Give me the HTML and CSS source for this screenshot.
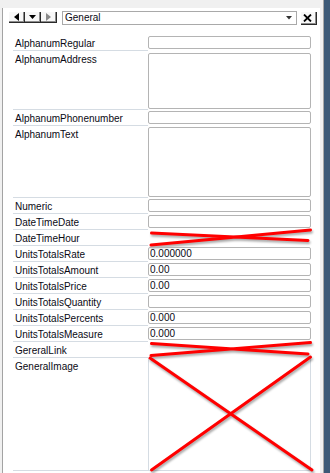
FILE: index.html
```html
<!DOCTYPE html>
<html>
<head>
<meta charset="utf-8">
<link rel="stylesheet" href="styles.css">
</head>
<body>
<div class="window">
  <div class="panel">
    <div class="toolbar">
      <div class="nav">
        <div class="nb"><svg width="5" height="8" viewBox="0 0 5 8"><polygon points="5,0 5,8 0,4" fill="#000"/></svg></div>
        <div class="nb"><svg width="7" height="4" viewBox="0 0 7 4"><polygon points="0,0 7,0 3.5,4" fill="#000"/></svg></div>
        <div class="nb"><svg width="5" height="8" viewBox="0 0 5 8"><polygon points="0,0 0,8 5,4" fill="#8a8a8a"/></svg></div>
      </div>
      <div class="combo">
        <span class="combo-text">General</span>
        <svg class="caret" width="6" height="4" viewBox="0 0 6 4"><polygon points="0,0 6,0 3,3.5" fill="#333"/></svg>
      </div>
      <div class="close"><svg width="9" height="8" viewBox="0 0 9 8"><path d="M1 0.5 L8 7.5 M8 0.5 L1 7.5" stroke="#000" stroke-width="1.8"/></svg></div>
    </div>

    <div class="grid">
      <div class="row"><div class="lbl">AlphanumRegular</div><div class="val"><div class="box"></div></div></div>
      <div class="row row-addr"><div class="lbl">AlphanumAddress</div><div class="val"><div class="box box-addr"></div></div></div>
      <div class="row"><div class="lbl">AlphanumPhonenumber</div><div class="val"><div class="box"></div></div></div>
      <div class="row row-text"><div class="lbl">AlphanumText</div><div class="val"><div class="box box-text"></div></div></div>
      <div class="row"><div class="lbl">Numeric</div><div class="val"><div class="box"></div></div></div>
      <div class="row"><div class="lbl">DateTimeDate</div><div class="val"><div class="box"></div></div></div>
      <div class="row"><div class="lbl">DateTimeHour</div><div class="val">
        <svg class="cross" width="163" height="16" viewBox="0 0 163 16"><path d="M3.5 3 L160 10.5 M3 15 L162.5 0" stroke="#ff0000" stroke-width="3" stroke-linecap="round" fill="none"/></svg>
      </div></div>
      <div class="row"><div class="lbl">UnitsTotalsRate</div><div class="val"><div class="box">0.000000</div></div></div>
      <div class="row"><div class="lbl">UnitsTotalsAmount</div><div class="val"><div class="box">0.00</div></div></div>
      <div class="row"><div class="lbl">UnitsTotalsPrice</div><div class="val"><div class="box">0.00</div></div></div>
      <div class="row"><div class="lbl">UnitsTotalsQuantity</div><div class="val"><div class="box"></div></div></div>
      <div class="row"><div class="lbl">UnitsTotalsPercents</div><div class="val"><div class="box">0.000</div></div></div>
      <div class="row"><div class="lbl">UnitsTotalsMeasure</div><div class="val"><div class="box">0.000</div></div></div>
      <div class="row"><div class="lbl">GereralLink</div><div class="val">
        <svg class="cross" width="163" height="16" viewBox="0 0 163 16"><path d="M3.5 1.5 L160 12 M3 13.5 L162.5 0.5" stroke="#ff0000" stroke-width="3" stroke-linecap="round" fill="none"/></svg>
      </div></div>
      <div class="row row-img"><div class="lbl">GeneralImage</div><div class="val val-img">
        <svg class="cross" width="163" height="113" viewBox="0 0 163 113"><path d="M2 0 L164 112 M162.5 -1 L3.5 112" stroke="#ff0000" stroke-width="3" stroke-linecap="round" fill="none"/></svg>
      </div></div>
    </div>
  </div>
  <div class="strip"></div>
</div>
</body>
</html>
```
FILE: styles.css
```css
* { box-sizing: border-box; }
html, body { margin: 0; padding: 0; }
body {
  width: 330px;
  height: 473px;
  overflow: hidden;
  background: #f0f0f0;
  font-family: "Liberation Sans", Arial, sans-serif;
  font-size: 10px;
  color: #0a0a14;
}
.window {
  display: flex;
  height: 473px;
  padding-left: 2px;
}
.panel {
  width: 318px;
  margin-top: 8px;
  background: #fff;
  border-left: 1px solid #a3a3a3;
}
.strip {
  width: 10px;
  background: linear-gradient(to right, #f0f0f0 0 3px, #a8a8a8 3px 4px, #3c5977 4px);
}
.toolbar {
  display: flex;
  align-items: flex-start;
  padding: 3px 0 0 6px;
  height: 17px;
}
.nav {
  display: flex;
  margin-top: 1px;
}
.nb {
  width: 16px;
  height: 11px;
  background: #f7f7f7;
  box-shadow: inset -1px -1px #2a2a2a, inset -2px -2px #8c8c8c;
  display: flex;
  align-items: center;
  justify-content: center;
  padding: 0 2px 1px 0;
}
.combo {
  margin-left: 5px;
  width: 235px;
  height: 14px;
  border: 1px solid #a9a9a9;
  display: flex;
  align-items: center;
  padding-left: 2px;
  padding-right: 4px;
}
.combo-text {
  flex: 1;
  line-height: 12px;
}
.caret { display: block; }
.close {
  margin-left: 4px;
  margin-top: 1px;
  width: 16px;
  height: 13px;
  background: #f7f7f7;
  box-shadow: inset -1px -1px #2a2a2a, inset -2px -2px #8c8c8c;
  display: flex;
  align-items: center;
  justify-content: center;
  padding: 0 3px 2px 0;
}
.grid {
  margin-top: 10px;
  margin-left: 10px;
  width: 298px;
}
.row {
  display: flex;
  height: 16px;
}
.row-addr { height: 59px; }
.row-text { height: 72px; }
.row-img { height: 113px; }
.lbl {
  width: 135px;
  padding-left: 2px;
  padding-top: 2px;
  line-height: 14px;
  border-bottom: 1px solid #d5dce3;
  white-space: nowrap;
}
.val {
  width: 163px;
  padding-top: 1px;
  position: relative;
}
.box {
  height: 13px;
  border: 1px solid #b4b4b4;
  border-radius: 2px;
  padding-left: 1px;
  line-height: 12px;
  white-space: nowrap;
}
.box-addr { height: 56px; margin-top: 1px; }
.box-text { height: 70px; }
.val-img {
  border-left: 1px solid #d5dce3;
  border-right: 1px solid #d5dce3;
  border-bottom: 1px solid #d5dce3;
}
.cross {
  position: absolute;
  left: 0;
  top: 0;
  overflow: visible;
  filter: drop-shadow(1px 2px 1px rgba(0, 0, 0, 0.35));
}
.val-img .cross { left: -1px; }
```
